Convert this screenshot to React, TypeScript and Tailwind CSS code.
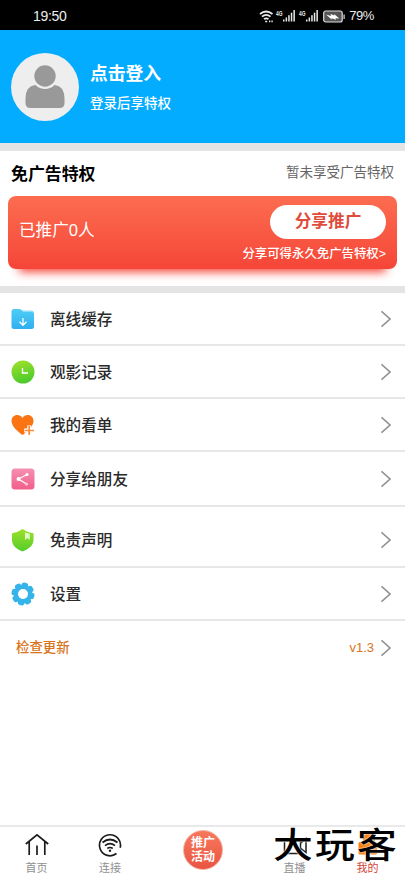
import React from 'react';

interface MenuItem {
  label: string;
  icon: React.ReactNode;
  rowClass: string;
}

const FolderIcon = () => (
  <svg width="24" height="22" viewBox="0 0 24 22">
    <defs>
      <linearGradient id="folder" x1="0" y1="0" x2="0" y2="1">
        <stop offset="0" stopColor="#4fcdf5" />
        <stop offset="1" stopColor="#2fb0f0" />
      </linearGradient>
    </defs>
    <path d="M10 2.500h10.500q2.500 0 2.500 2.500v5H10z" fill="#8fdcf8" />
    <path d="M0.500 3.500q0-2.500 2.500-2.500h5.500q1.500 0 2.500 1.500l1 1.500h8.500q2.500 0 2.500 2.500v12q0 2.500-2.500 2.500h-17.500q-2.500 0-2.500-2.500z" fill="url(#folder)" />
    <path d="M12 10v7M8.500 13.800l3.500 3.500 3.500-3.500" fill="none" stroke="#fff" strokeWidth="1.300" />
  </svg>
);

const ClockIcon = () => (
  <svg width="24" height="24" viewBox="0 0 24 24">
    <defs>
      <linearGradient id="clock" x1="0" y1="0" x2="0.300" y2="1">
        <stop offset="0" stopColor="#a6e22a" />
        <stop offset="1" stopColor="#4dcb2b" />
      </linearGradient>
    </defs>
    <circle cx="12" cy="12" r="11.500" fill="url(#clock)" />
    <path d="M11.500 8v5h5.500" fill="none" stroke="#fff" strokeWidth="1.300" />
  </svg>
);

const HeartIcon = () => (
  <svg width="24" height="22" viewBox="0 0 24 22">
    <path d="M11.500 21C8 18.500.5 13 .5 7 .5 3.500 3 1 6.200 1c2.300 0 4.200 1.200 5.300 3 1.100-1.800 3-3 5.300-3 3.200 0 5.700 2.500 5.700 6 0 6-7.500 11.500-11 14z" fill="#fa7414" />
    <path d="M18.200 11.500v9.500M13.200 16.500h10" stroke="#fff" strokeWidth="4" />
    <path d="M18.200 12v9M13.700 16.500h9.300" stroke="#fa8a34" strokeWidth="1.700" />
  </svg>
);

const ShareIcon = () => (
  <svg width="24" height="22" viewBox="0 0 24 22">
    <defs>
      <linearGradient id="share" x1="0" y1="0" x2="0" y2="1">
        <stop offset="0" stopColor="#f58fb2" />
        <stop offset="1" stopColor="#f15f8b" />
      </linearGradient>
    </defs>
    <rect x="0.500" y="0.500" width="23" height="21" rx="3.500" fill="url(#share)" />
    <path d="M16 6.500L7.500 11l8 5" fill="none" stroke="#fff" strokeWidth="1.200" />
    <circle cx="16" cy="6.500" r="1.500" fill="#fff" />
    <circle cx="7.500" cy="11" r="2" fill="#fff" />
    <circle cx="15.500" cy="16" r="1.600" fill="#fcc8d8" />
  </svg>
);

const ShieldIcon = () => (
  <svg width="24" height="24" viewBox="0 0 24 24">
    <defs>
      <linearGradient id="shield" x1="0" y1="0" x2="0" y2="1">
        <stop offset="0" stopColor="#9de02c" />
        <stop offset="1" stopColor="#55cd2a" />
      </linearGradient>
    </defs>
    <path d="M11.500 1q5 3.500 10 4 1 0 1 1v6c0 5.500-5 9-11 11.500C5.500 21 1 17.500 1 12V6q0-1 1-1 4.500-.5 9.500-4z" fill="url(#shield)" />
    <path d="M14 4.500l4.800 1.300v6.200l-2.300-2-2.500 2z" fill="#e0f7c6" />
  </svg>
);

const GearIcon = () => (
  <svg width="24" height="24" viewBox="0 0 24 24" fill="#35b4ea">
    {[0, 45, 90, 135, 180, 225, 270, 315].map((deg) => (
      <rect key={deg} x="8.700" y="0.500" width="6.600" height="7" rx="2.500" transform={`rotate(${deg + 12} 12 12)`} />
    ))}
    <circle cx="12" cy="12" r="7.200" fill="none" stroke="#35b4ea" strokeWidth="4.400" />
    <circle cx="12" cy="12" r="4.900" fill="#fff" />
  </svg>
);

const Chevron = () => (
  <svg width="10" height="18" viewBox="0 0 10 18" fill="none" stroke="#929292" strokeWidth="1.600">
    <path d="M0.500 1.300L9 9L0.500 16.700" />
  </svg>
);

const Signal = () => (
  <div className="flex h-3 items-start">
    <svg className="overflow-visible" width="7" height="7" viewBox="0 0 7 7" fill="#e8e8e8">
      <text x="0" y="5.500" fontSize="6.500" fontWeight="700" textLength="6.500" lengthAdjust="spacingAndGlyphs">4G</text>
    </svg>
    <svg width="12" height="12" viewBox="0 0 12 12" fill="#e8e8e8">
      <rect x="0" y="9.500" width="1.500" height="2" />
      <rect x="2.600" y="7.500" width="1.500" height="4" />
      <rect x="5.200" y="5.200" width="1.500" height="6.300" />
      <rect x="7.800" y="2.700" width="1.500" height="8.800" />
      <rect x="10.400" y="0" width="1.500" height="11.500" />
    </svg>
  </div>
);

const StatusBar = () => (
  <div className="flex h-[30px] items-center bg-black pt-0.5 pr-[31px] pl-[33px] font-['Liberation_Sans',sans-serif] text-[#eeeeee]">
    <span className="text-[14px] leading-4 tracking-[-0.3px]">19:50</span>
    <div className="ml-auto flex items-center">
      <svg width="15" height="13" viewBox="0 0 15 13" fill="none" stroke="#eee" strokeWidth="1.700">
        <path d="M1 4q6-5 12.500 0M3 6.700q4.200-3.500 8.500 0M5 9.200q2.300-1.800 4.500 0" />
        <path d="M6.200 11.500h2M10 11.300h1.300M12.400 11.300h1.300" />
      </svg>
      <div className="ml-[2px]"><Signal /></div>
      <div className="ml-1"><Signal /></div>
      <svg className="ml-[5px]" width="22" height="13" viewBox="0 0 22 13">
        <rect x="0.700" y="1" width="18.500" height="11" rx="2" fill="#555" stroke="#ddd" strokeWidth="1.200" />
        <rect x="20.500" y="4.500" width="1.200" height="4.500" fill="#ddd" />
        <path d="M3 4.500l5 1.500-.5-2 4 1.500-.3-1.500 5 4.500-3.700-.3.500 1.500-4.500-1.500.5 1.500z" fill="#fff" />
      </svg>
      <span className="ml-1 text-[13px] leading-4 tracking-[-0.400px]">79%</span>
    </div>
  </div>
);

const UserHeader = () => (
  <div className="flex h-[113px] items-center bg-[#03acff] pl-[11px]">
    <div className="h-17 w-17 rounded-full bg-[#eeeeee]">
      <svg width="68" height="68" viewBox="0 0 68 68" fill="#999">
        <path d="M24 32h20q9 1 9.500 13v5q0 5-5 5h-29q-5 0-5-5v-5q.5-12 9.500-13z" />
        <circle cx="34" cy="23" r="13" fill="#eee" />
        <circle cx="34" cy="23" r="10.700" />
      </svg>
    </div>
    <div className="ml-[11px] flex flex-col gap-[8px] pt-[3px] text-white">
      <span className="text-[17.800px] leading-6 font-bold">点击登入</span>
      <span className="text-[13.500px] leading-5 font-medium">登录后享特权</span>
    </div>
  </div>
);

const PromoSection = () => (
  <div className="h-[135px] px-2">
    <div className="flex h-[45px] items-center justify-between pr-[3px] pl-[3px]">
      <span className="pt-0.5 text-[16.900px] font-bold text-black">免广告特权</span>
      <span className="text-[13.500px] text-[#666666]">暂未享受广告特权</span>
    </div>
    <div className="flex h-[73px] items-center justify-between rounded-lg bg-gradient-to-b from-[#fc6c50] to-[#f54538] pr-[11px] pl-[11px] text-white shadow-[0_14px_9px_-11px_#f54538]">
      <span className="pb-0.5 text-[16.600px]">已推广0人</span>
      <div className="flex flex-col items-end pt-0.5">
        <button className="h-[34px] w-29 rounded-full bg-white pt-px text-[16.700px] font-bold text-[#df4c3c]">分享推广</button>
        <span className="mt-[6px] text-[12.400px] leading-[18px] font-medium">分享可得永久免广告特权&gt;</span>
      </div>
    </div>
  </div>
);

const menuItems: MenuItem[] = [
  { label: '离线缓存', icon: <FolderIcon />, rowClass: 'h-[53px]' },
  { label: '观影记录', icon: <ClockIcon />, rowClass: 'h-[53px]' },
  { label: '我的看单', icon: <HeartIcon />, rowClass: 'h-[53px]' },
  { label: '分享给朋友', icon: <ShareIcon />, rowClass: 'h-[55px]' },
  { label: '免责声明', icon: <ShieldIcon />, rowClass: 'h-[61px] pt-[6px]' },
  { label: '设置', icon: <GearIcon />, rowClass: 'h-[53px]' },
];

const MenuRow: React.FC<{ item: MenuItem }> = ({ item }) => (
  <div className={`flex items-center border-b-2 border-[#e7e7e7] pr-[14px] pl-[10.500px] ${item.rowClass}`}>
    <div className="flex w-6 justify-center">{item.icon}</div>
    <span className="ml-[15.500px] pt-0.5 text-[15.600px] font-medium text-[#2a2a2a]">{item.label}</span>
    <div className="ml-auto"><Chevron /></div>
  </div>
);

const TabBar = () => (
  <div className="relative flex h-[53px] border-t-2 border-[#e9e9e9] bg-white text-[11px] leading-4 text-[#8f8f8f]">
    <div className="flex w-[73px] flex-col items-center pt-1.5">
      <svg width="24" height="24" viewBox="0 0 24 24" fill="none" stroke="#1c1c1c" strokeWidth="1.700">
        <path d="M0.800 11L12 1.800l11.200 9.200M4.200 8.500v13.500M19.800 8.500v13.500M12 12.500v9.500" />
      </svg>
      <span className="mt-[3px]">首页</span>
    </div>
    <div className="flex w-[74px] flex-col items-center pt-1.5">
      <svg width="24" height="24" viewBox="0 0 24 24" fill="none" stroke="#1c1c1c" strokeWidth="1.700">
        <path d="M18.500 20.500A10.500 10.500 0 1 1 22.200 14.800" />
        <path d="M4.500 9.500q7.500-6 15 0M7 12.700q5-4 10 0M9.300 15.500q2.700-2 5.400 0" />
        <circle cx="12" cy="17.800" r="1.200" fill="#1c1c1c" stroke="none" />
      </svg>
      <span className="mt-[3px]">连接</span>
    </div>
    <div className="flex w-[112px] justify-center pt-[3px]">
      <div className="flex h-10 w-10 items-center justify-center rounded-full border border-[#f5b1a4] bg-gradient-to-b from-[#f7785c] to-[#e95442] text-center text-[12px] leading-[14px] font-bold text-white">
        推广<br />活动
      </div>
    </div>
    <div className="flex w-[71px] flex-col items-center pt-1.5">
      <svg width="24" height="24" viewBox="0 0 24 24" fill="none" stroke="#1c1c1c" strokeWidth="1.500">
        <path d="M17.500 5v15.500H1.500V9M18 10l5-4.500v14l-5-4" />
      </svg>
      <span className="mt-[3px]">直播</span>
    </div>
    <div className="flex w-[75px] flex-col items-center pt-1.5 text-[#cf4636]">
      <svg width="24" height="24" viewBox="0 0 24 24" fill="#fa7c0a">
        <rect x="7" y="1" width="12" height="10" rx="3" />
        <rect x="2.500" y="9" width="18.500" height="12.500" rx="1.500" />
      </svg>
      <span className="mt-[3px]">我的</span>
    </div>
    {/* brand mark over the last two tabs */}
    <div className="absolute top-0.5 left-[273px] flex origin-left scale-x-[1.120] gap-[2px] text-[35.500px] leading-[34px] font-medium text-black [text-shadow:0_0_2px_#fff,0_0_1px_#fff]">
      <span>大</span>
      <span>玩</span>
      <span>客</span>
    </div>
  </div>
);

export default function App() {
  return (
    <div className="flex h-[878px] w-[405px] flex-col overflow-hidden bg-white font-['Liberation_Sans','Noto_Sans_CJK_SC',sans-serif]">
      <StatusBar />
      <UserHeader />
      <div className="h-2 bg-[#e4e4e4]" />
      <PromoSection />
      <div className="h-[7px] bg-[#e4e4e4]" />
      {menuItems.map((item) => (
        <MenuRow key={item.label} item={item} />
      ))}
      <div className="flex h-[53px] items-center pr-[14px] pl-4 text-[13.400px] font-medium text-[#d87420]">
        <span className="pt-px">检查更新</span>
        <span className="mr-[7px] ml-auto pt-px text-[13px] font-normal">v1.3</span>
        <Chevron />
      </div>
      <div className="flex-1" />
      <TabBar />
    </div>
  );
}
